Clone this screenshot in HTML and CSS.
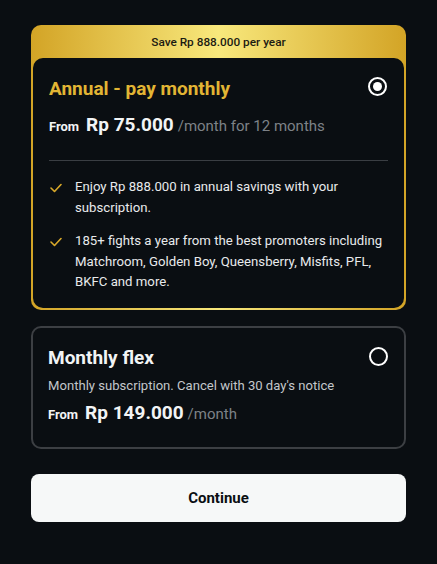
FILE: index.html
```html
<!DOCTYPE html>
<html lang="en">
<head>
    <meta charset="UTF-8">
    <title>Choose your plan</title>
    <link rel="stylesheet" href="styles.css">
</head>
<body>
    <div class="plans">
        <!-- annual plan (selected) -->
        <div class="plan plan-featured">
            <div class="banner">Save Rp 888.000 per year</div>
            <div class="plan-body">
                <div class="plan-head">
                    <h2 class="plan-title gold">Annual - pay monthly</h2>
                    <span class="radio checked"></span>
                </div>
                <p class="price"><span class="from">From</span> <span class="amount">Rp 75.000</span> <span class="period">/month for 12 months</span></p>
                <hr class="divider">
                <ul class="perks">
                    <li>
                        <svg class="check" viewBox="0 0 12 10" width="12" height="10"><path d="M1 5 L4.5 8.5 L11 1.5" fill="none" stroke="#d9a92a" stroke-width="1.6" stroke-linecap="round" stroke-linejoin="round"/></svg>
                        <span>Enjoy Rp 888.000 in annual savings with your subscription.</span>
                    </li>
                    <li>
                        <svg class="check" viewBox="0 0 12 10" width="12" height="10"><path d="M1 5 L4.5 8.5 L11 1.5" fill="none" stroke="#d9a92a" stroke-width="1.6" stroke-linecap="round" stroke-linejoin="round"/></svg>
                        <span>185+ fights a year from the best promoters including Matchroom, Golden Boy, Queensberry, Misfits, PFL, BKFC and more.</span>
                    </li>
                </ul>
            </div>
        </div>

        <!-- monthly plan -->
        <div class="plan plan-plain">
            <div class="plan-head">
                <h2 class="plan-title">Monthly flex</h2>
                <span class="radio"></span>
            </div>
            <p class="note">Monthly subscription. Cancel with 30 day's notice</p>
            <p class="price"><span class="from">From</span> <span class="amount">Rp 149.000</span> <span class="period">/month</span></p>
        </div>

        <button class="continue">Continue</button>
    </div>
</body>
</html>
```

FILE: styles.css
```css
html, body { background: #0a0e12; }
body { margin: 0; font-family: Roboto, "Liberation Sans", sans-serif; color: #f2f4f5; }
.plans { width: 375px; margin: 0 auto; padding: 25px 0 0 0; display: flex; flex-direction: column; }
.plan { border-radius: 10px; }
.plan-featured { background: linear-gradient(90deg, #d3a426 0%, #f8e87c 50%, #d3a426 100%); padding: 0 2px 2px 2px; }
.banner { height: 33px; display: flex; align-items: center; justify-content: center; font-size: 11.8px; font-weight: 500; color: #1b1a12; }
.plan-body { background: #0a0e12; border-radius: 10px; padding: 18px 16px 15px 16px; }
.plan-head { display: flex; justify-content: space-between; align-items: flex-start; }
.plan-title { margin: 0; font-size: 19px; font-weight: 700; line-height: 26px; }
.gold { color: #e2b534; }
.radio { width: 15px; height: 15px; border: 2px solid #ffffff; border-radius: 50%; margin: 1px 1px 0 0; display: flex; align-items: center; justify-content: center; }
.radio.checked::after { content: ""; width: 9px; height: 9px; border-radius: 50%; background: #ffffff; }
.plan-plain .radio { margin-top: 2px; }
.price { margin: 11px 0 0 0; line-height: 24px; }
.from { font-size: 13px; font-weight: 700; }
.amount { font-size: 19px; font-weight: 700; margin-left: 3px; }
.period { font-size: 15px; color: #7d8287; }
.divider { border: none; border-top: 1px solid #3a3e43; margin: 21px 0 0 0; }
.perks { list-style: none; margin: 16px 0 0 0; padding: 0; display: flex; flex-direction: column; gap: 13px; }
.perks li { display: flex; gap: 13px; font-size: 13.2px; line-height: 20.5px; color: #e8eaec; }
.check { flex: none; margin-top: 6px; margin-left: 1px; }
.plan-plain { border: 2px solid #3c3f43; margin-top: 16px; padding: 17px 15px 20px 15px; }
.note { margin: 6px 0 0 0; font-size: 13.1px; color: #c3c7cb; line-height: 18px; }
.plan-plain .price { margin-top: 6px; }
.continue { margin-top: 25px; height: 48px; border: none; border-radius: 8px; background: #f6f8f8; font-family: inherit; font-size: 15px; font-weight: 700; color: #0a0e12; cursor: pointer; }
```
